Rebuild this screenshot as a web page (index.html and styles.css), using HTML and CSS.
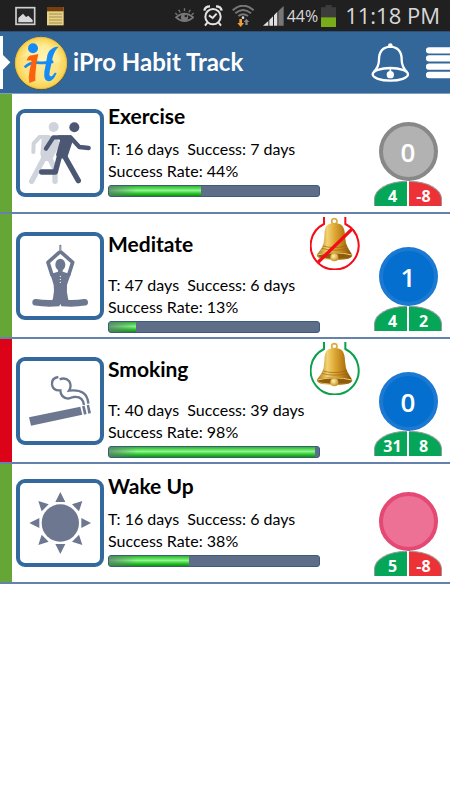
FILE: index.html
```html
<!doctype html>
<html lang="en">
<head>
  <title>iPro Habit Track</title>
  <meta charset="UTF-8">
  <meta name="viewport" content="width=device-width, initial-scale=1">
  <link rel="stylesheet" href="styles.css">
</head>
<body>
  <!-- shared gradients and the gold bell -->
  <svg class="defs" width="0" height="0" aria-hidden="true">
    <defs>
      <linearGradient id="gold" x1="0" x2="1" y1="0" y2="0">
        <stop offset="0" stop-color="#a87412"/>
        <stop offset="0.3" stop-color="#f3d272"/>
        <stop offset="0.5" stop-color="#dfa936"/>
        <stop offset="0.75" stop-color="#b97b14"/>
        <stop offset="1" stop-color="#7d4e08"/>
      </linearGradient>
      <radialGradient id="clapper" cx="0.4" cy="0.35" r="0.7">
        <stop offset="0" stop-color="#fff3a8"/>
        <stop offset="1" stop-color="#c08a20"/>
      </radialGradient>
      <radialGradient id="coin" cx="0.5" cy="0.5" r="0.5">
        <stop offset="0" stop-color="#fff6c4"/>
        <stop offset="0.7" stop-color="#ffeb95"/>
        <stop offset="1" stop-color="#f8cf45"/>
      </radialGradient>
    </defs>
    <symbol id="gold-bell" viewBox="256 12 150 159">
      <circle cx="329" cy="25" r="8" fill="none" stroke="#d9ad42" stroke-width="5"/>
      <path d="M306 38 Q314 30 329 30 Q345 30 353 38 Q361 48 361 70 Q362 91 370 105 L383 126 Q382 136 362 139 Q330 145 298 139 Q277 136 276 126 L291 105 Q299 90 299 70 Q299 47 306 38Z" fill="url(#gold)"/>
      <path d="M278 125 Q329 111 382 125 Q378 136 330 138 Q284 136 278 125Z" fill="#8c5c10"/>
      <path d="M278 126 Q330 113 382 126" fill="none" stroke="#f1cf6b" stroke-width="3"/>
      <path d="M295 99 Q330 109 367 98 M291 106 Q330 117 371 106" fill="none" stroke="#97640f" stroke-width="2"/>
      <circle cx="329" cy="133" r="12" fill="url(#clapper)"/>
    </symbol>
  </svg>

  <div class="status-bar">
    <svg class="status-left" width="50" height="20" viewBox="44 17 150 60" aria-hidden="true">
      <rect x="47" y="22" width="56" height="50" fill="#252525" stroke="#d0d0d0" stroke-width="5"/>
      <path d="M54 66 V53 L68 40 L77 50 L84 46 L97 59 V66Z" fill="#d8d8d8"/>
      <rect x="140" y="20" width="50" height="55" fill="#e6d387"/>
      <rect x="140" y="20" width="50" height="13" fill="#783f0e"/>
      <path d="M146 41 H185 M146 50 H185 M146 59 H185 M146 68 H185" stroke="#a68e4b" stroke-width="3"/>
    </svg>
    <div class="status-right">
      <svg width="19" height="18" viewBox="515 22 58 54" aria-hidden="true">
        <path d="M518 53 Q544 30 571 53 Q544 76 518 53Z" fill="none" stroke="#777" stroke-width="5"/>
        <circle cx="544" cy="53" r="11" fill="#777"/>
        <circle cx="548" cy="49" r="4" fill="#222"/>
        <path d="M544 25 V34 M526 30 L531 38 M562 30 L557 38 M516 40 L522 45 M572 40 L566 45" stroke="#777" stroke-width="4"/>
      </svg>
      <svg width="20" height="22" viewBox="606 14 60 66" aria-hidden="true">
        <circle cx="636" cy="49" r="23" fill="none" stroke="#e3e3e3" stroke-width="6"/>
        <path d="M610 31 Q612 18 627 18 M662 31 Q660 18 645 18" fill="none" stroke="#e3e3e3" stroke-width="7"/>
        <path d="M624 45 L635 53 L647 40 M619 67 L612 76 M653 67 L660 76" fill="none" stroke="#e3e3e3" stroke-width="6"/>
      </svg>
      <svg width="22" height="22" viewBox="15 12 66 66" aria-hidden="true">
        <path d="M17 28 Q48 0 80 28 M25 37 Q48 17 72 37 M34 45 Q48 34 63 45" fill="none" stroke="#777" stroke-width="6"/>
        <circle cx="48" cy="50" r="4" fill="#ddd"/>
        <path d="M37 54 H45 V66 H51 L41 78 L31 66 H37Z" fill="#eba03a"/>
        <path d="M55 72 V63 H50 L58 53 L67 63 H62 V72Z" fill="#888"/>
      </svg>
      <svg width="21" height="20" viewBox="108 20 63 60" aria-hidden="true">
        <path d="M108 79 L124 65 V79Z M127 62 L138 51 V79 H127Z M141 48 L151 37 V79 H141Z" fill="#e0e0e0"/>
        <path d="M154 35 L170 20 V79 H154Z" fill="#777"/>
      </svg>
      <span class="percent">44%</span>
      <svg width="15" height="22" viewBox="285 14 45 66" aria-hidden="true">
        <path d="M299 14 H317 V21 H330 V52 H285 V21 H299Z" fill="#3c3c3c"/>
        <rect x="285" y="51" width="45" height="29" fill="#78ac18"/>
      </svg>
      <span class="clock">11:18 PM</span>
    </div>
  </div>

  <header class="app-bar">
    <a class="back" href="#" aria-label="Back">
      <svg width="11" height="53" viewBox="0 105 33 159" aria-hidden="true">
        <path d="M0 105 H9 V162 L31 184 L9 206 V264 H0Z" fill="#fff"/>
      </svg>
    </a>
    <svg class="logo" width="54" height="54" viewBox="42 102 162 162" aria-hidden="true">
      <circle cx="123" cy="185" r="79" fill="#4b5b55"/>
      <circle cx="123" cy="183" r="77" fill="url(#coin)" stroke="#edbe3e" stroke-width="3"/>
      <path d="M50 178 Q75 150 116 174 Q160 197 197 169 Q195 225 159 248 Q120 269 80 246 Q48 224 50 178Z" fill="#f9d557" opacity="0.35"/>
      <circle cx="99" cy="139" r="15" fill="#158bf5"/>
      <path d="M74 196 Q88 181 112 182 Q140 184 160 179" fill="none" stroke="#158bf5" stroke-width="8"/>
      <path d="M176 134 Q158 133 147 148 Q141 158 140 172 L133 210 Q130 237 146 238 Q160 237 170 213 L164 212 Q156 226 150 222 Q147 219 149 209 L158 166 Q163 146 176 134Z" fill="#158bf5"/>
      <path d="M80 176 Q84 160 97 160 L115 156 Q108 185 107 207 Q105 223 106 236 L88 243 Q84 226 89 205 L95 176 Q87 173 80 176Z" fill="#fb620d"/>
    </svg>
    <h1>iPro Habit Track</h1>
    <button type="button" class="bar-btn" aria-label="Reminders">
      <svg width="39" height="40" viewBox="439 124 117 120" aria-hidden="true">
        <path d="M447 211 Q463 195 463 174 Q463 137 497 135 Q531 137 531 174 Q531 195 547 211" fill="none" stroke="#fff" stroke-width="7"/>
        <ellipse cx="497" cy="218" rx="53" ry="19" fill="none" stroke="#fff" stroke-width="7"/>
        <circle cx="497" cy="132" r="7" fill="#fff"/>
        <circle cx="497" cy="219" r="11" fill="#fff"/>
        <path d="M497 200 V220" stroke="#fff" stroke-width="5"/>
      </svg>
    </button>
    <button type="button" class="bar-btn menu" aria-label="Menu">
      <svg width="24" height="34" viewBox="603 134 72 102" aria-hidden="true">
        <path d="M612 147 H690 M612 171 H690 M612 196 H690 M612 221 H690" stroke="#fff" stroke-width="19" stroke-linecap="round"/>
      </svg>
    </button>
  </header>

  <main>
    <section class="habit">
      <button type="button" class="tile" aria-label="Exercise details">
        <svg viewBox="60 54 240 240" aria-hidden="true">
          <g fill="#cfd3dc" stroke="#cfd3dc" stroke-linecap="round" stroke-linejoin="round">
            <circle cx="161" cy="96" r="15" stroke="none"/>
            <path d="M145 126 L119 126 L101 145 L100 171" fill="none" stroke-width="12"/>
            <path d="M126 122 H160 L180 148 L154 198 H126 L121 176Z" stroke="none"/>
            <path d="M130 193 L95 259 M150 192 L165 222 V259 M160 130 L179 153" fill="none" stroke-width="16"/>
          </g>
          <g fill="#4c5873" stroke="#4c5873" stroke-linecap="round" stroke-linejoin="round">
            <circle cx="223" cy="97" r="15" stroke="none"/>
            <path d="M204 127 H160 L138 161 M211 127 L238 156 L266 159" fill="none" stroke-width="13"/>
            <path d="M174 121 H211 Q222 127 218 139 L202 187 L176 193 L168 180 L180 137Z" stroke="none"/>
            <path d="M178 185 L166 231 H125 M195 186 L235 257" fill="none" stroke-width="16"/>
          </g>
        </svg>
      </button>
      <div class="info">
        <div class="head"><h2>Exercise</h2></div>
        <p>T: 16 days&nbsp; Success: 7 days</p>
        <p>Success Rate: 44%</p>
        <div class="bar"><div class="fill" style="width: 44%"></div></div>
      </div>
      <div class="score">
        <button type="button" class="count gray">0</button>
        <div class="totals"><span class="plus">4</span><span class="minus">-8</span></div>
      </div>
    </section>

    <section class="habit">
      <button type="button" class="tile" aria-label="Meditate details">
        <svg viewBox="60 68 240 240" aria-hidden="true">
          <g fill="none" stroke="#6d7890" stroke-linecap="round" stroke-linejoin="round">
            <path d="M178 117 L144 147 L156 185 M184 117 L218 147 L206 185" stroke-width="11"/>
            <path d="M181 97 V118" stroke-width="6"/>
            <path d="M107 267 Q136 272 178 269 M254 267 Q225 272 184 269" stroke-width="20"/>
          </g>
          <ellipse cx="181" cy="154" rx="15" ry="18" fill="#6d7890"/>
          <path d="M150 180 Q161 180 174 175 V166 H188 V175 Q201 180 213 180 Q205 203 201 215 Q199 235 204 255 L210 274 H152 L159 255 Q164 233 161 215 Q157 201 150 180Z" fill="#6d7890"/>
          <path d="M181 189 V216" stroke="#fff" stroke-width="4" stroke-linecap="round" stroke-dasharray="0 9"/>
          <path d="M181 98 V112" stroke="#fff" stroke-width="1"/>
          <path d="M177 280 L181 272 L185 280Z" fill="#fff"/>
        </svg>
      </button>
      <div class="info">
        <div class="head">
          <h2>Meditate</h2>
          <button type="button" class="alarm" aria-label="Reminder off">
            <svg width="50" height="53" viewBox="256 12 150 159" aria-hidden="true">
              <path d="M298 12 V33 A72 72 0 1 0 362 33 V12" fill="none" stroke="#f40d16" stroke-width="6"/>
              <use href="#gold-bell" x="256" y="12" width="150" height="159"/>
              <path d="M281 147 L381 49" stroke="#f40d16" stroke-width="10"/>
            </svg>
          </button>
        </div>
        <p>T: 47 days&nbsp; Success: 6 days</p>
        <p>Success Rate: 13%</p>
        <div class="bar"><div class="fill" style="width: 13%"></div></div>
      </div>
      <div class="score">
        <button type="button" class="count blue">1</button>
        <div class="totals"><span class="plus">4</span><span class="plus">2</span></div>
      </div>
    </section>

    <section class="habit bad">
      <button type="button" class="tile" aria-label="Smoking details">
        <svg viewBox="60 68 240 240" aria-hidden="true">
          <path d="M87 237 L241 205 L247 229 L93 262Z M246 204 L254 202 L260 227 L252 229Z M260 201 L267 199 L273 224 L265 226Z" fill="#6d7890"/>
          <path d="M175 116 Q154 119 156 139 Q160 158 181 156 Q182 179 205 181 L222 176 Q248 173 252 200" fill="none" stroke="#6d7890" stroke-width="7"/>
          <path d="M179 123 Q196 116 208 129 Q216 143 207 157 Q262 150 265 196" fill="none" stroke="#6d7890" stroke-width="7"/>
        </svg>
      </button>
      <div class="info">
        <div class="head">
          <h2>Smoking</h2>
          <button type="button" class="alarm" aria-label="Reminder on">
            <svg width="50" height="53" viewBox="256 12 150 159" aria-hidden="true">
              <path d="M298 12 V33 A72 72 0 1 0 362 33 V12" fill="none" stroke="#0aa04c" stroke-width="6"/>
              <use href="#gold-bell" x="256" y="12" width="150" height="159"/>
            </svg>
          </button>
        </div>
        <p>T: 40 days&nbsp; Success: 39 days</p>
        <p>Success Rate: 98%</p>
        <div class="bar"><div class="fill" style="width: 98%"></div></div>
      </div>
      <div class="score">
        <button type="button" class="count blue">0</button>
        <div class="totals"><span class="plus">31</span><span class="plus">8</span></div>
      </div>
    </section>

    <section class="habit">
      <button type="button" class="tile" aria-label="Wake Up details">
        <svg viewBox="60 63 240 240" aria-hidden="true">
          <g fill="#6d7890">
            <circle cx="181" cy="183" r="56"/>
            <path d="M181 90 L196 120 H166Z M181 276 L166 246 H196Z M88 183 L118 168 V198Z M273 183 L244 168 V198Z"/>
            <path d="M115 117 L146 127 L125 148Z M247 117 L216 127 L237 148Z M115 249 L125 218 L146 239Z M247 249 L237 218 L216 239Z"/>
          </g>
        </svg>
      </button>
      <div class="info">
        <div class="head"><h2>Wake Up</h2></div>
        <p>T: 16 days&nbsp; Success: 6 days</p>
        <p>Success Rate: 38%</p>
        <div class="bar"><div class="fill" style="width: 38%"></div></div>
      </div>
      <div class="score">
        <button type="button" class="count pink" aria-label="Not logged"></button>
        <div class="totals"><span class="plus">5</span><span class="minus">-8</span></div>
      </div>
    </section>
  </main>
</body>
</html>
```

FILE: styles.css
```css
* {
  box-sizing: border-box;
}
body {
  margin: 0;
  min-height: 100vh;
  background: #fff;
  color: #000;
  font-family: Lato, 'Open Sans', sans-serif;
  overflow-x: hidden;
}
button {
  padding: 0;
  border: none;
  background: none;
  font-family: inherit;
  cursor: pointer;
}
svg {
  display: block;
}
h1, h2, p {
  margin: 0;
}
.defs {
  position: absolute;
}

/* phone status bar */
.status-bar {
  display: flex;
  align-items: center;
  justify-content: space-between;
  height: 31px;
  padding: 0 10px 0 15px;
  background: #202020;
  color: #d8d8d8;
  font-family: 'Open Sans', 'Noto Sans', sans-serif;
}
.status-right {
  display: flex;
  align-items: center;
  gap: 9px;
}
.percent {
  font-size: 16px;
  margin: 0 -6px;
}
.clock {
  font-size: 22px;
  line-height: 28px;
  padding-bottom: 2px;
}

/* title bar */
.app-bar {
  display: flex;
  align-items: center;
  height: 63px;
  background: #336699;
  border-top: 1px solid #28527c;
  border-bottom: 1px solid #7f9fc0;
}
.logo {
  margin: 0 5px 0 3px;
}
.app-bar h1 {
  flex: 1;
  padding-bottom: 3px;
  color: #fff;
  font-size: 24px;
  font-weight: 700;
}
.bar-btn.menu {
  margin-left: 16px;
}

/* habit rows */
.habit {
  display: flex;
  align-items: center;
  min-height: 120px;
  padding: 0 8px 0 16px;
  border-bottom: 2px solid #6582ad;
  box-shadow: inset 12px 0 #66a636;
}
.habit.bad {
  box-shadow: inset 12px 0 #dc0319;
}
.tile {
  flex: none;
  width: 88px;
  height: 88px;
  border: 4px solid #34699d;
  border-radius: 9px;
  background: #fff;
}
.info {
  flex: 1;
  align-self: flex-start;
  margin-left: 4px;
  padding: 3px 0 4px;
}
.head {
  display: flex;
  align-items: center;
  justify-content: space-between;
  min-height: 37px;
  margin-bottom: 4px;
}
.head h2 {
  font-size: 21px;
  font-weight: 700;
}
.info p {
  font-size: 16px;
  line-height: 22px;
  white-space: nowrap;
}
.bar {
  height: 12px;
  margin: 3px 40px 0 0;
  border: 1px solid #3d5b7c;
  border-radius: 3px;
  background: #5e6e88;
  overflow: hidden;
}
.fill {
  height: 100%;
  background:
    linear-gradient(90deg, rgba(90, 125, 110, 0.75), rgba(90, 125, 110, 0) 28px),
    linear-gradient(180deg, #28b828, #8cf58c 45%, #2fc22f 75%, #079407);
}

/* daily count and totals */
.score {
  flex: none;
  align-self: flex-end;
  width: 68px;
  margin-left: 14px;
  padding-bottom: 6px;
}
.count {
  display: block;
  width: 59px;
  height: 59px;
  margin: 0 auto;
  border: 4px solid #888;
  border-radius: 50%;
  color: #fff;
  font-family: 'Open Sans', 'Noto Sans', sans-serif;
  font-size: 26px;
  font-weight: 600;
}
.count.gray {
  background: #b2b2b2;
}
.count.blue {
  background: #056fd0;
  border-color: #1b79d2;
}
.count.pink {
  background: #ed7194;
  border-color: #e44873;
}
.totals {
  display: flex;
  gap: 2px;
}
.totals span {
  flex: 1;
  height: 25px;
  border-top: 1px solid #999;
  color: #fff;
  font-family: 'Open Sans', 'Noto Sans', sans-serif;
  font-size: 16px;
  font-weight: 700;
  line-height: 28px;
  text-align: center;
}
.totals span:first-child {
  border-left: 1px solid #999;
  border-top-left-radius: 32px 18px;
  padding-left: 3px;
}
.totals span:last-child {
  border-right: 1px solid #999;
  border-top-right-radius: 32px 18px;
  padding-right: 3px;
}
.plus {
  background: #05a658;
}
.minus {
  background: #ed3237;
}
```
